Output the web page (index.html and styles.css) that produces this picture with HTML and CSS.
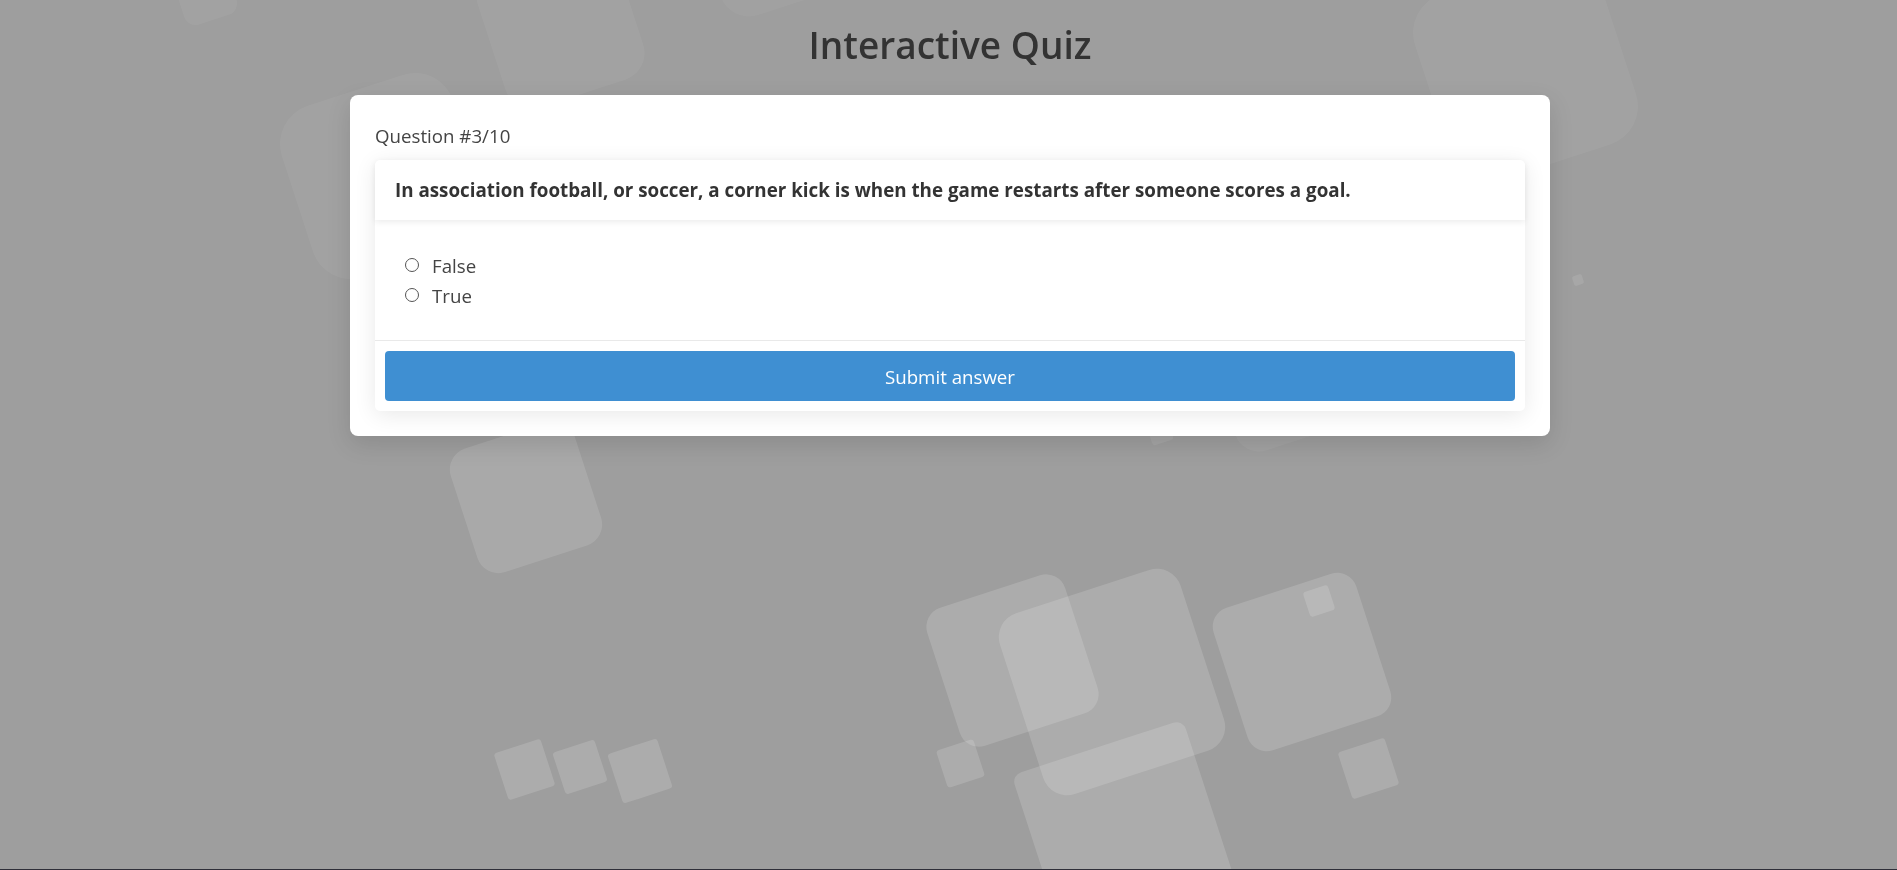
FILE: index.html
```html
<!DOCTYPE html>
<html lang="en">
<head>
<meta charset="utf-8">
<title>Interactive Quiz</title>
<link rel="stylesheet" href="styles.css">
</head>
<body>
<div class="bg" aria-hidden="true">
  <div class="sq s1"></div><div class="sq s2"></div><div class="sq s3"></div><div class="sq s4"></div>
  <div class="sq s5"></div><div class="sq s6"></div><div class="sq s7"></div><div class="sq s8"></div>
  <div class="sq s9"></div><div class="sq s10"></div><div class="sq s11"></div><div class="sq s12"></div>
  <div class="sq s13"></div><div class="sq s14"></div><div class="sq s15"></div><div class="sq s16"></div>
  <div class="sq s17"></div><div class="sq s18"></div><div class="sq s19"></div>
</div>
<main class="page">
  <h1 class="title">Interactive Quiz</h1>
  <section class="card">
    <div class="counter">Question #3/10</div>
    <div class="qcard">
      <div class="qhead">In association football, or soccer, a corner kick is when the game restarts after someone scores a goal.</div>
      <div class="qbody">
        <label class="opt"><input type="radio" name="answer" value="False"><span>False</span></label>
        <label class="opt"><input type="radio" name="answer" value="True"><span>True</span></label>
      </div>
      <div class="qfoot">
        <button class="submit" type="button">Submit answer</button>
      </div>
    </div>
  </section>
</main>
</body>
</html>
```

FILE: styles.css
```css
html, body {
  margin: 0;
  padding: 0;
  height: 100%;
}

body {
  background: #9e9e9e;
  font-family: "Open Sans", "Noto Sans", sans-serif;
  color: #333;
  overflow: hidden;
}

.bg {
  position: fixed;
  inset: 0;
  overflow: hidden;
  z-index: 0;
}

.sq {
  position: absolute;
  background: rgba(255, 255, 255, 0.15);
  transform: rotate(-18deg);
}

.s1  { left: 178px;  top: -34px; width: 55px;  height: 55px;  border-radius: 12px; background: rgba(255,255,255,0.05); }
.s2  { left: 488px;  top: -48px; width: 145px; height: 145px; border-radius: 28px; background: rgba(255,255,255,0.05); }
.s3  { left: 293px;  top: 86px;  width: 180px; height: 180px; border-radius: 40px; background: rgba(255,255,255,0.05); }
.s4  { left: 710px;  top: -100px; width: 110px; height: 110px; border-radius: 30px; background: rgba(255,255,255,0.04); }
.s5  { left: 1428px; top: -28px; width: 195px; height: 195px; border-radius: 40px; background: rgba(255,255,255,0.05); }
.s6  { left: 1573px; top: 275px; width: 10px;  height: 10px;  border-radius: 2px;  background: rgba(255,255,255,0.1); }
.s7  { left: 1149px; top: 421px; width: 22px;  height: 22px;  border-radius: 3px;  background: rgba(255,255,255,0.08); }
.s8  { left: 1225px; top: 345px; width: 100px; height: 100px; border-radius: 25px; background: rgba(255,255,255,0.05); }
.s9  { left: 461px;  top: 432px; width: 130px; height: 130px; border-radius: 22px; background: rgba(255,255,255,0.12); }
.s10 { left: 500px;  top: 745px; width: 49px;  height: 49px;  border-radius: 3px; }
.s11 { left: 558px;  top: 745px; width: 44px;  height: 44px;  border-radius: 3px; }
.s12 { left: 614px;  top: 745px; width: 52px;  height: 52px;  border-radius: 3px; }
.s13 { left: 940px;  top: 588px; width: 145px; height: 145px; border-radius: 20px; }
.s14 { left: 1017px; top: 587px; width: 190px; height: 190px; border-radius: 25px; }
.s15 { left: 1035px; top: 743px; width: 180px; height: 180px; border-radius: 10px; }
.s16 { left: 1227px; top: 587px; width: 150px; height: 150px; border-radius: 20px; }
.s17 { left: 1306px; top: 588px; width: 26px;  height: 26px;  border-radius: 3px; }
.s18 { left: 941px;  top: 744px; width: 39px;  height: 39px;  border-radius: 3px; }
.s19 { left: 1344px; top: 744px; width: 49px;  height: 49px;  border-radius: 3px; }

.page {
  position: relative;
  z-index: 1;
  box-sizing: border-box;
  height: 870px;
  padding: 20px 0 0 3px;
  border-bottom: 1px solid #2f2f39;
}

.title {
  margin: 0 0 25px;
  text-align: center;
  font-size: 37px;
  line-height: 50px;
  font-weight: 600;
  color: #333;
}

.card {
  width: 1200px;
  box-sizing: border-box;
  margin: 0 auto;
  padding: 27px 25px 25px;
  background: #fff;
  border-radius: 8px;
  box-shadow: 0 8px 24px rgba(0, 0, 0, 0.12);
}

.counter {
  font-size: 18.7px;
  line-height: 28px;
  color: #444;
  margin-bottom: 10px;
}

.qcard {
  background: #fff;
  border-radius: 5px;
  box-shadow: 0 4px 22px rgba(0, 0, 0, 0.09);
}

.qhead {
  position: relative;
  z-index: 1;
  height: 60px;
  padding: 0 20px;
  line-height: 60px;
  font-size: 18.8px;
  font-weight: 700;
  color: #333;
  border-radius: 5px 5px 0 0;
  box-shadow: 0 2px 6px rgba(0, 0, 0, 0.08);
}

.qbody {
  display: flex;
  flex-direction: column;
  padding: 30px 25px;
}

.opt {
  display: flex;
  align-items: center;
  height: 30px;
  font-size: 18.7px;
  color: #444;
}

.opt input {
  appearance: none;
  -webkit-appearance: none;
  box-sizing: border-box;
  width: 14px;
  height: 14px;
  margin: 0 13px 1px 5px;
  border: 1px solid #555;
  border-radius: 50%;
  background: #fff;
}

.qfoot {
  border-top: 1px solid #e9e9e9;
  padding: 10px;
}

.submit {
  display: block;
  width: 100%;
  height: 50px;
  border: 0;
  border-radius: 4px;
  background: #3f8fd2;
  color: #fff;
  font-family: "Open Sans", "Noto Sans", sans-serif;
  font-size: 18.7px;
}
```
